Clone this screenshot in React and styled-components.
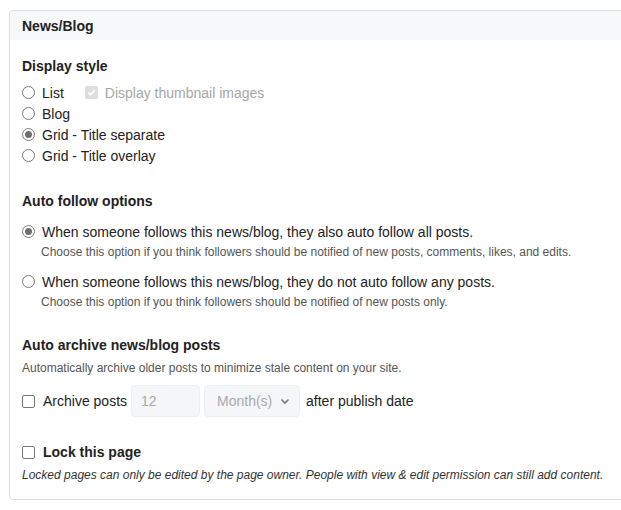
import React from "react";
import styled, { createGlobalStyle } from "styled-components";

const Global = createGlobalStyle`
  html, body { margin: 0; padding: 0; background: #fff; overflow: hidden; }
  body { font-family: "Liberation Sans", Arial, sans-serif; color: #222; }
`;

const Page = styled.div`
  box-sizing: border-box;
  width: 621px;
  padding: 10px 0 0 9px;
  overflow: hidden;
`;

const Card = styled.section`
  width: calc(100% + 20px);
  border: 1px solid #d9dde6;
  border-radius: 4px;
  background: #fff;
`;

const Header = styled.header`
  height: 29px;
  display: flex;
  align-items: center;
  padding: 0 12px;
  background: #f7f8fa;
  border-radius: 4px 4px 0 0;
  font-weight: bold;
  font-size: 14px;
  color: #222;
`;

const Body = styled.div`
  padding: 16px 12px 15px;
`;

const Heading = styled.div`
  font-weight: bold;
  font-size: 14px;
  line-height: 20px;
  margin-top: ${(p) => p.$mt || 0}px;
  color: #222;
`;

const Group = styled.div`
  margin-top: ${(p) => p.$mt || 0}px;
  display: flex;
  flex-direction: column;
`;

const Row = styled.label`
  display: flex;
  align-items: center;
  height: ${(p) => p.$h || 21}px;
  font-size: 14px;
  color: ${(p) => (p.$muted ? "#a6a6a6" : "#222")};
  font-weight: ${(p) => (p.$bold ? "bold" : "normal")};
  margin-left: ${(p) => p.$ml || 0}px;
`;

const RadioDot = styled.span`
  box-sizing: border-box;
  width: 13px;
  height: 13px;
  border-radius: 50%;
  border: 1px solid ${(p) => (p.$on ? "#7b7b7b" : "#767676")};
  background: #fff;
  margin: 0 7px 0 0;
  display: inline-flex;
  align-items: center;
  justify-content: center;
  flex: none;
  &::after {
    content: "";
    display: ${(p) => (p.$on ? "block" : "none")};
    width: 7px;
    height: 7px;
    border-radius: 50%;
    background: #6f6f6f;
  }
`;

const Box = styled.span`
  box-sizing: border-box;
  width: 13px;
  height: 13px;
  border-radius: 2px;
  border: 1px solid ${(p) => (p.$disabled ? "#dedede" : "#767676")};
  background: ${(p) => (p.$disabled ? "#dedede" : "#fff")};
  margin-right: ${(p) => p.$mr || 8}px;
  display: inline-flex;
  align-items: center;
  justify-content: center;
  flex: none;
`;

const Help = styled.div`
  font-size: 12px;
  line-height: 18px;
  color: ${(p) => (p.$italic ? "#333" : "#555")};
  padding-left: ${(p) => p.$pl || 0}px;
  font-style: ${(p) => (p.$italic ? "italic" : "normal")};
  margin-top: ${(p) => p.$mt || 0}px;
`;

const InlineRow = styled.div`
  display: flex;
  align-items: center;
  gap: 4px;
  margin-top: ${(p) => p.$mt || 0}px;
  font-size: 14px;
  color: #222;
`;

const Field = styled.div`
  box-sizing: border-box;
  height: 32px;
  width: ${(p) => p.$w}px;
  border: 1px solid #eceef2;
  border-radius: 4px;
  background: #f5f6f8;
  color: #a9a9a9;
  font-size: 14px;
  display: flex;
  align-items: center;
  justify-content: space-between;
  padding: 0 9px 0 ${(p) => p.$pl || 9}px;
`;

const After = styled.span`
  margin-left: 2px;
`;

function Radio({ on, children, ...rest }) {
  return (
    <Row {...rest}>
      <RadioDot $on={on} />
      {children}
    </Row>
  );
}

function Check({ checked, disabled, mr }) {
  return (
    <Box $disabled={disabled} $mr={mr}>
      {checked && (
        <svg width="9" height="9" viewBox="0 0 9 9">
          <path d="M1.3 4.6 L3.6 6.8 L7.8 2" stroke="#fff" strokeWidth="1.6" fill="none" />
        </svg>
      )}
    </Box>
  );
}

export default function App() {
  return (
    <>
      <Global />
      <Page>
        <Card>
          <Header>News/Blog</Header>
          <Body>
            <Heading>Display style</Heading>
            <Group $mt={6}>
              <Row>
                <RadioDot />
                List
                <Row as="span" $muted $ml={21}>
                  <Check checked disabled mr={7} />
                  Display thumbnail images
                </Row>
              </Row>
              <Radio>Blog</Radio>
              <Radio on>Grid - Title separate</Radio>
              <Radio>Grid - Title overlay</Radio>
            </Group>

            <Heading $mt={25}>Auto follow options</Heading>
            <Group $mt={10}>
              <Radio on>When someone follows this news/blog, they also auto follow all posts.</Radio>
              <Help $pl={19} $mt={1}>
                Choose this option if you think followers should be notified of new posts, comments, likes, and edits.
              </Help>
            </Group>
            <Group $mt={10}>
              <Radio>When someone follows this news/blog, they do not auto follow any posts.</Radio>
              <Help $pl={19} $mt={1}>Choose this option if you think followers should be notified of new posts only.</Help>
            </Group>

            <Heading $mt={24}>Auto archive news/blog posts</Heading>
            <Help $mt={4}>Automatically archive older posts to minimize stale content on your site.</Help>
            <InlineRow $mt={8}>
              <Row as="span" $h={32}>
                <Check />
                Archive posts
              </Row>
              <Field $w={69}>12</Field>
              <Field $w={96} $pl={12}>
                Month(s)
                <svg width="10" height="7" viewBox="0 0 10 7">
                  <path d="M1.5 1.5 L5 5 L8.5 1.5" stroke="#777" strokeWidth="1.6" fill="none" />
                </svg>
              </Field>
              <After>after publish date</After>
            </InlineRow>

            <Group $mt={25}>
              <Row $h={20} $bold>
                <Check />
                Lock this page
              </Row>
              <Help $italic $mt={4}>
                Locked pages can only be edited by the page owner. People with view &amp; edit permission can still add content.
              </Help>
            </Group>
          </Body>
        </Card>
      </Page>
    </>
  );
}
